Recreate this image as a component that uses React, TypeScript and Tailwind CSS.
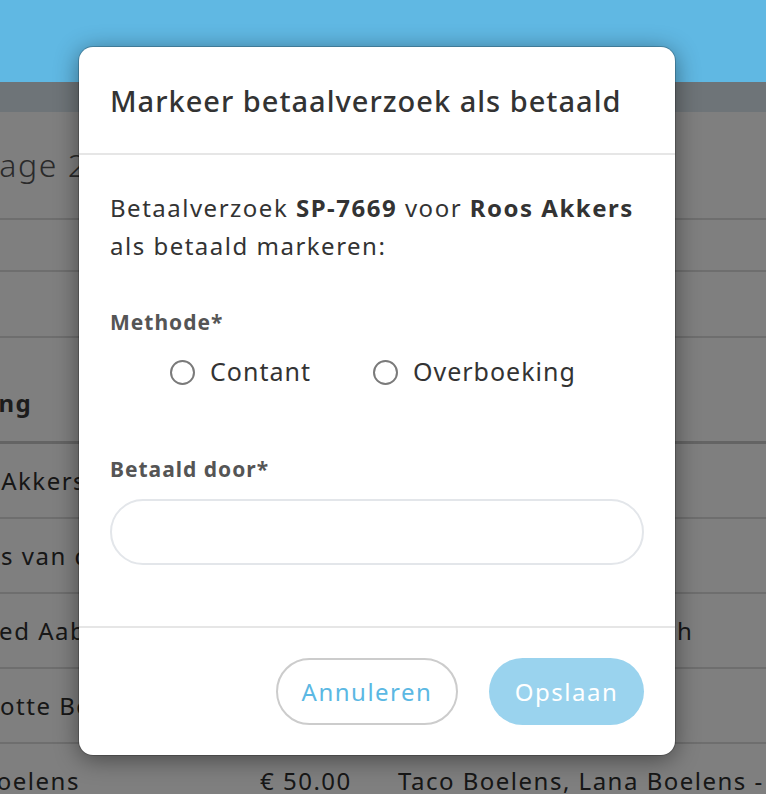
import React from "react";

const rows = [
  { name: "Roos Akkers", off: "-ml-[68px]", amount: "", desc: "" },
  { name: "Jules van den Berg", off: "-ml-[46px]", amount: "", desc: "" },
  { name: "Ahmed Aabid", off: "-ml-[58px]", amount: "", desc: "Ahmed Aabid, Sara Aah" },
  { name: "Charlotte Beek", off: "-ml-[67px]", amount: "", desc: "" },
  { name: "Taco Boelens", off: "-ml-[85px]", amount: "€ 50.00", desc: "Taco Boelens, Lana Boelens - Lid" },
];

function Radio({ label }: { label: string }) {
  return (
    <label className="flex items-center gap-[15px]">
      <span className="w-[25px] h-[25px] rounded-full border-2 border-[#7a7a7a] bg-white" />
      <span className="text-[25px] tracking-[1px] text-[#333]">{label}</span>
    </label>
  );
}

export default function App() {
  return (
    <div
      className="relative w-[766px] h-[794px] overflow-hidden bg-white tracking-[1.5px]"
      style={{ fontFamily: '"Noto Sans", "Open Sans", sans-serif' }}
    >
      {/* page behind overlay */}
      <div className="flex flex-col">
        <div className="h-[82px] bg-[#60b8e3] relative z-20" />
        <div className="h-[30px] bg-[#dde9f1]" />
        <div className="h-[108px] border-b-2 border-[#dcdcdc] flex items-center">
          <span className="-ml-[21px] text-[32px] font-light text-[#555]">Page 2</span>
        </div>
        <div className="h-[52px] border-b-2 border-[#dcdcdc]" />
        <div className="h-[66px] border-b-2 border-[#dcdcdc]" />
        <div className="h-[106px] border-b-[3px] border-[#c8c8c8] flex items-end pb-[20px]">
          <span className="-ml-[80px] text-[24px] font-bold text-[#383838]">Betaling</span>
        </div>
        {rows.map((r, i) => (
          <div key={i} className="h-[75px] border-b-2 border-[#dcdcdc] flex items-center text-[24px] text-[#2e2e2e]">
            <div className="w-[260px] shrink-0 overflow-hidden whitespace-nowrap">
              <span className={r.off + " inline-block"}>{r.name}</span>
            </div>
            <div className="w-[138px] shrink-0 whitespace-nowrap">{r.amount}</div>
            <div className="whitespace-nowrap">{r.desc}</div>
          </div>
        ))}
      </div>

      {/* overlay */}
      <div className="absolute inset-0 top-[82px] bg-black/50 z-10" />

      {/* modal */}
      <div className="absolute z-30 left-[79px] top-[47px] w-[596px] h-[708px] rounded-[14px] bg-white shadow-[0_4px_24px_rgba(0,0,0,0.45)] ring-1 ring-black/20 flex flex-col">
        <div className="h-[108px] px-[31px] flex items-center border-b-2 border-[#e6e6e6]">
          <h2 className="text-[29px] tracking-[1px] font-medium text-[#333] leading-none">
            Markeer betaalverzoek als betaald
          </h2>
        </div>
        <div className="px-[31px] pt-[34px] pb-[61px] border-b-2 border-[#e6e6e6] flex flex-col">
          <p className="text-[24px] leading-[38px] text-[#333]">
            Betaalverzoek <b className="font-bold">SP-7669</b> voor <b className="font-bold">Roos Akkers</b> als betaald
            markeren:
          </p>
          <div className="mt-[43px] text-[21px] tracking-[1px] leading-[28px] font-bold text-[#555]">Methode*</div>
          <div className="mt-[16px] h-[40px] pl-[60px] flex items-center gap-[62px]">
            <Radio label="Contant" />
            <Radio label="Overboeking" />
          </div>
          <div className="mt-[63px] text-[21px] tracking-[1px] leading-[28px] font-bold text-[#555]">Betaald door*</div>
          <input className="mt-[16px] h-[66px] w-full rounded-full border-2 border-[#e3e6ea] outline-none px-6 text-[22px]" />
        </div>
        <div className="flex-1 px-[31px] flex items-center justify-end gap-[31px]">
          <button className="w-[182px] h-[67px] rounded-full border-2 border-[#cccccc] bg-white text-[24px] text-[#5bb8e3]">
            Annuleren
          </button>
          <button className="w-[155px] h-[67px] rounded-full bg-[#9ad3ee] text-[24px] text-white">Opslaan</button>
        </div>
      </div>
    </div>
  );
}
